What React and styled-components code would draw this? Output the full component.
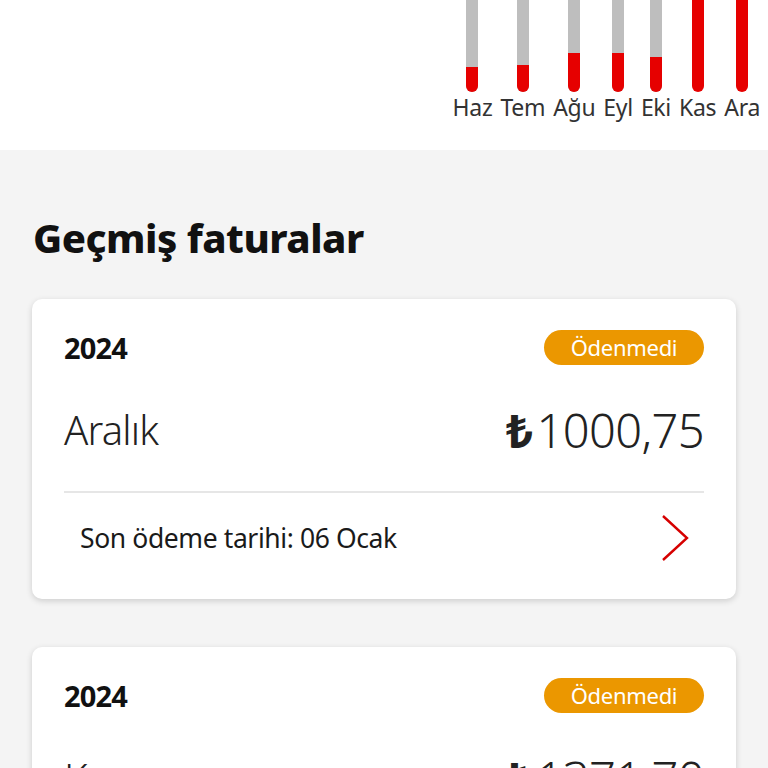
import React from 'react'
import styled, { createGlobalStyle } from 'styled-components'

const GlobalStyle = createGlobalStyle`
  html, body {
    margin: 0;
    padding: 0;
    background: #f4f4f4;
    font-family: "Noto Sans", "Open Sans", sans-serif;
    color: #1a1a1a;
  }
`

const months = [
  { label: 'Haz', fill: 25 },
  { label: 'Tem', fill: 27 },
  { label: 'Ağu', fill: 39 },
  { label: 'Eyl', fill: 39 },
  { label: 'Eki', fill: 35 },
  { label: 'Kas', fill: 92 },
  { label: 'Ara', fill: 92 },
]

const bills = [
  { year: '2024', month: 'Aralık', amount: '1000,75', due: '06 Ocak' },
  { year: '2024', month: 'Kasım', amount: '1371,70', due: '06 Aralık' },
]

const Page = styled.div`
  width: 768px;
  height: 768px;
  overflow: hidden;
  background: #f4f4f4;
`

const ChartArea = styled.div`
  height: 150px;
  background: #ffffff;
  display: flex;
  justify-content: flex-end;
  padding-right: 8px;
  overflow: hidden;
`

const Chart = styled.div`
  display: flex;
  gap: 8px;
  align-items: flex-start;
`

const Column = styled.div`
  display: flex;
  flex-direction: column;
  align-items: center;
`

const Bar = styled.div`
  width: 12px;
  height: 92px;
  background: #bebebe;
  border-radius: 0 0 6px 6px;
  overflow: hidden;
  display: flex;
  flex-direction: column;
  justify-content: flex-end;
`

const Fill = styled.div`
  width: 100%;
  background: #e60000;
`

const MonthLabel = styled.span`
  margin-top: 2px;
  font-size: 23px;
  line-height: 26px;
  color: #333333;
  letter-spacing: -0.3px;
`

const Section = styled.div`
  padding: 62px 32px 0;
`

const Heading = styled.h2`
  margin: 0 0 35px 1px;
  font-size: 40px;
  line-height: 52px;
  font-weight: 800;
  letter-spacing: -0.5px;
  color: #111111;
`

const List = styled.div`
  display: flex;
  flex-direction: column;
  gap: 48px;
`

const Card = styled.div`
  background: #ffffff;
  border-radius: 10px;
  box-shadow: 0 2px 6px rgba(0, 0, 0, 0.16);
  padding: 31px 32px 0;
`

const Row = styled.div`
  display: flex;
  justify-content: space-between;
  align-items: center;
`

const Year = styled.span`
  font-size: 29px;
  line-height: 35px;
  font-weight: 700;
  letter-spacing: -0.8px;
  color: #111111;
`

const Badge = styled.span`
  height: 35px;
  width: 160px;
  box-sizing: border-box;
  border-radius: 18px;
  background: #eb9700;
  color: #ffffff;
  font-size: 22px;
  line-height: 35px;
  text-align: center;
  letter-spacing: -0.3px;
`

const AmountRow = styled(Row)`
  margin-top: 39px;
  height: 52px;
`

const Month = styled.span`
  font-size: 40px;
  line-height: 52px;
  font-weight: 300;
  letter-spacing: -0.8px;
  color: #222222;
`

const Amount = styled.span`
  font-size: 47px;
  line-height: 52px;
  font-weight: 300;
  letter-spacing: -0.6px;
  color: #222222;
`

const Lira = styled.span`
  font-weight: 700;
  margin-right: 4px;
`

const Divider = styled.div`
  margin-top: 35px;
  height: 2px;
  background: #e6e6e6;
`

const Footer = styled.div`
  display: flex;
  justify-content: space-between;
  align-items: center;
  padding: 22px 15px 38px 16px;
`

const Due = styled.span`
  font-size: 26.5px;
  line-height: 46px;
  letter-spacing: -0.4px;
  color: #1a1a1a;
`

const Chevron = () => (
  <svg width="28" height="46" viewBox="0 0 28 46" fill="none">
    <path d="M2 1 L26 23 L2 45" stroke="#d60000" strokeWidth="2.4" strokeLinejoin="miter" />
  </svg>
)

export default function App() {
  return (
    <Page>
      <GlobalStyle />
      <ChartArea>
        <Chart>
          {months.map(m => (
            <Column key={m.label}>
              <Bar>
                <Fill style={{ height: `${m.fill}px` }} />
              </Bar>
              <MonthLabel>{m.label}</MonthLabel>
            </Column>
          ))}
        </Chart>
      </ChartArea>
      <Section>
        <Heading>Geçmiş faturalar</Heading>
        <List>
          {bills.map((b, i) => (
            <Card key={i}>
              <Row>
                <Year>{b.year}</Year>
                <Badge>Ödenmedi</Badge>
              </Row>
              <AmountRow>
                <Month>{b.month}</Month>
                <Amount><Lira>₺</Lira>{b.amount}</Amount>
              </AmountRow>
              <Divider />
              <Footer>
                <Due>Son ödeme tarihi: {b.due}</Due>
                <Chevron />
              </Footer>
            </Card>
          ))}
        </List>
      </Section>
    </Page>
  )
}
